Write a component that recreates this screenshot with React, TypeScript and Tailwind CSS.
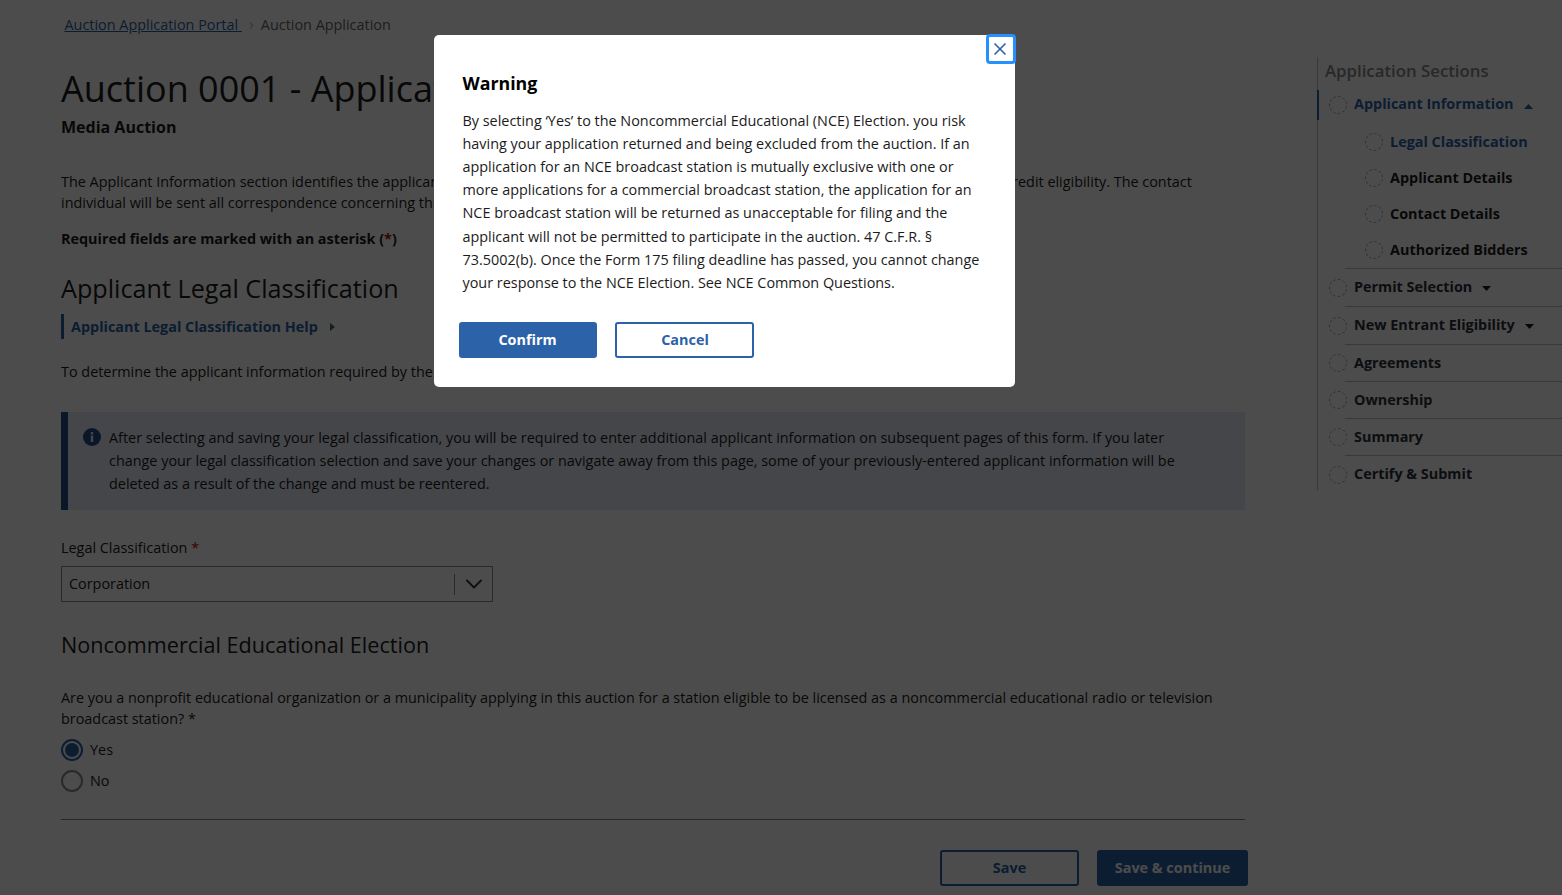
import { X, ChevronDown, ChevronRight } from "lucide-react";

const font = { fontFamily: '"Open Sans", sans-serif' };

function StatusDot() {
  return <span className="block w-[18px] h-[18px] shrink-0 rounded-full border border-dashed border-[#a0a0a0]" />;
}

function Caret({ up }: { up?: boolean }) {
  return (
    <svg width="9" height="5" viewBox="0 0 9 5" className="ml-[3px] mt-[2px]">
      <path d={up ? "M0 5 L4.5 0 L9 5 Z" : "M0 0 L4.5 5 L9 0 Z"} fill={up ? "#2b62a8" : "#1b1b1b"} />
    </svg>
  );
}

function SubItem({ label, active }: { label: string; active?: boolean }) {
  return (
    <div className="h-9 flex items-center gap-[7px] pl-[47px]">
      <StatusDot />
      <span className={`text-[14.4px] font-bold ${active ? "text-[#2b62a8]" : "text-[#1b1b1b]"}`}>{label}</span>
    </div>
  );
}

function NavItem({ label, caret, tall }: { label: string; caret?: boolean; tall?: boolean }) {
  return (
    <div className="pl-[11px]">
      <div className={`flex items-center gap-[7px] ${tall ? "h-[37px]" : "h-[36px]"}`}>
        <StatusDot />
        <span className={`text-[14.4px] font-bold text-[#2a2f3a] ${tall ? "mb-[2px]" : ""}`}>{label}</span>
        {caret && <Caret />}
      </div>
      <div className="h-px ml-[16px] bg-[#c0c0c0]" />
    </div>
  );
}

function Sidebar() {
  return (
    <aside className="w-[245px] shrink-0 mt-[57px] h-[434px] border-l border-[#c0c0c0]">
      <div className="pl-[7px] pt-[3px] text-[16.8px] font-semibold text-[#888888] leading-[22px]">Application Sections</div>
      <div className="mt-[8px] -ml-px h-[30px] border-l-2 border-[#2b62a8] pl-[10px] flex items-center gap-[7px]">
        <StatusDot />
        <span className="text-[14.4px] font-bold text-[#2b62a8] mb-[2px]">Applicant Information</span>
        <Caret up />
      </div>
      <div className="pt-[4px]">
        <SubItem label="Legal Classification" active />
        <SubItem label="Applicant Details" />
        <SubItem label="Contact Details" />
        <SubItem label="Authorized Bidders" />
      </div>
      <div className="h-px ml-[27px] bg-[#c0c0c0]" />
      <NavItem label="Permit Selection" caret tall />
      <NavItem label="New Entrant Eligibility" caret tall />
      <NavItem label="Agreements" />
      <NavItem label="Ownership" />
      <NavItem label="Summary" />
      <div className="pl-[11px] h-[37px] flex items-center gap-[7px]">
        <StatusDot />
        <span className="text-[14.4px] font-bold text-[#2a2f3a] mb-[2px]">Certify &amp; Submit</span>
      </div>
    </aside>
  );
}

function MainContent() {
  return (
    <main className="w-[1184px] shrink-0 ml-[61px] text-[#1b1b1b]">
      <nav className="pt-[15px] pl-[3.5px] h-[35px] flex items-center text-[14.4px] leading-5">
        <a className="underline text-[#2b62a8]">Auction Application Portal&nbsp;</a>
        <ChevronRight className="w-[11px] h-[11px] ml-[4px] mr-[4px] text-[#8a8a8a]" strokeWidth={2} />
        <span className="text-[#666666]">Auction Application</span>
      </nav>
      <h1 className="mt-[29px] text-[36px] leading-[49px] whitespace-nowrap">Auction 0001 - Application</h1>
      <div className="mt-[3px] text-base font-bold leading-[22px]">Media Auction</div>
      <p className="mt-[33px] text-[14.4px] leading-[21px]">
        The Applicant Information section identifies the applicant and its legal classification, ownership, a contact individual and new entrant bidding credit eligibility. The contact
        <br />
        individual will be sent all correspondence concerning this application.
      </p>
      <p className="mt-[15px] text-[14.4px] font-bold leading-[21px]">
        Required fields are marked with an asterisk (<span className="text-[#b50909]">*</span>)
      </p>
      <h2 className="mt-[21px] text-[25.2px] leading-[36px]">Applicant Legal Classification</h2>
      <div className="mt-[8px] flex items-center h-[25px] border-l-[3px] border-[#2b62a8] pl-[7px] text-[14.4px] font-bold text-[#2b62a8]">
        Applicant Legal Classification Help
        <svg width="5" height="8" viewBox="0 0 5 8" className="ml-[12px]">
          <path d="M0 0 L5 4 L0 8 Z" fill="#3a6b4a" />
        </svg>
      </div>
      <p className="mt-[22px] text-[14.4px] leading-[21px]">To determine the applicant information required by the form, select your legal classification from the drop-down list below.</p>
      <div className="mt-[30px] h-[98px] bg-[#e6ebf5] border-l-[7px] border-[#244f8a] flex pl-[15px] pt-[16px]">
        <svg width="18" height="18" viewBox="0 0 18 18" className="shrink-0">
          <circle cx="9" cy="9" r="9" fill="#244f8a" />
          <rect x="7.8" y="7.5" width="2.4" height="6.5" fill="#e6ebf5" />
          <rect x="7.8" y="4" width="2.4" height="2.4" fill="#e6ebf5" />
        </svg>
        <p className="ml-[8px] pr-[60px] -mt-[2px] text-[14.4px] leading-[23px]">
          After selecting and saving your legal classification, you will be required to enter additional applicant information on subsequent pages of this form. If you later change your legal classification selection and save your changes or navigate away from this page, some of your previously-entered applicant information will be deleted as a result of the change and must be reentered.
        </p>
      </div>
      <label className="block mt-[27px] text-[14.4px] leading-[21px]">
        Legal Classification <span className="text-[#b50909]">*</span>
      </label>
      <div className="mt-[8px] w-[432px] h-9 border border-[#8a8a8a] flex items-center pl-[7px] text-[14.4px]">
        <span className="flex-1">Corporation</span>
        <span className="w-px h-[21px] bg-[#8a8a8a]" />
        <ChevronDown className="w-[28px] h-[28px] ml-[5px] mr-[4px] text-[#333]" strokeWidth={1.6} />
      </div>
      <h3 className="mt-[26px] text-[21.6px] leading-[34px]">Noncommercial Educational Election</h3>
      <p className="mt-[25px] text-[14.4px] leading-[21px] pr-[20px]">
        Are you a nonprofit educational organization or a municipality applying in this auction for a station eligible to be licensed as a noncommercial educational radio or television broadcast station? *
      </p>
      <div className="mt-[10px] flex items-center h-[21px] gap-[7px] text-[14.4px]">
        <span className="w-[22px] h-[22px] rounded-full border-2 border-[#2b62a8] p-[2px]">
          <span className="block w-full h-full rounded-full bg-[#2b62a8]" />
        </span>
        Yes
      </div>
      <div className="mt-[10px] flex items-center h-[21px] gap-[7px] text-[14.4px]">
        <span className="w-[22px] h-[22px] rounded-full border-2 border-[#8a8a8a]" />
        No
      </div>
      <div className="mt-[28px] h-px bg-[#8a8a8a]" />
      <div className="mt-[30px] flex justify-end gap-[18px] -mr-[3px]">
        <button className="w-[139px] h-9 border-2 border-[#2b62a8] rounded-[3px] text-[14.4px] font-bold text-[#2b62a8]">Save</button>
        <button className="w-[151px] h-9 bg-[#2b62a8] rounded-[3px] text-[14.4px] font-bold text-white">Save &amp; continue</button>
      </div>
    </main>
  );
}

function WarningModal() {
  return (
    <div className="fixed inset-0 bg-black/70">
      <div className="mt-[35px] ml-[434px] w-[581px] h-[352px] bg-white rounded-[5px] relative pl-[28.5px] pr-[30px] pt-[35px] text-[#1b1b1b]">
        <button className="absolute -top-px -right-px w-[30px] h-[30px] rounded-[4px] border-[3px] border-[#2491ff] flex items-center justify-center bg-white">
          <X className="w-[20px] h-[20px] -ml-[2px] text-[#2b62a8]" strokeWidth={2} />
        </button>
        <h2 className="text-[17.8px] font-bold leading-[26px] text-black">Warning</h2>
        <p className="mt-[13.29px] text-[14.4px] leading-[23.04px]">
          By selecting ‘Yes’ to the Noncommercial Educational (NCE) Election. you risk having your application returned and being excluded from the auction. If an application for an NCE broadcast station is mutually exclusive with one or more applications for a commercial broadcast station, the application for an NCE broadcast station will be returned as unacceptable for filing and the applicant will not be permitted to participate in the auction. 47 C.F.R. § 73.5002(b). Once the Form 175 filing deadline has passed, you cannot change your response to the NCE Election. See NCE Common Questions.
        </p>
        <div className="mt-[28.43px] -ml-[4px] flex gap-[18px]">
          <button className="w-[138px] h-9 bg-[#2b62a8] rounded-[3px] text-[14.4px] font-bold text-white">Confirm</button>
          <button className="w-[139px] h-9 border-2 border-[#2b62a8] rounded-[3px] pl-[2px] text-[14.4px] font-bold text-[#2b62a8]">Cancel</button>
        </div>
      </div>
    </div>
  );
}

export default function App() {
  return (
    <div className="h-screen overflow-hidden bg-white flex justify-between relative" style={font}>
      <MainContent />
      <Sidebar />
      <WarningModal />
    </div>
  );
}
